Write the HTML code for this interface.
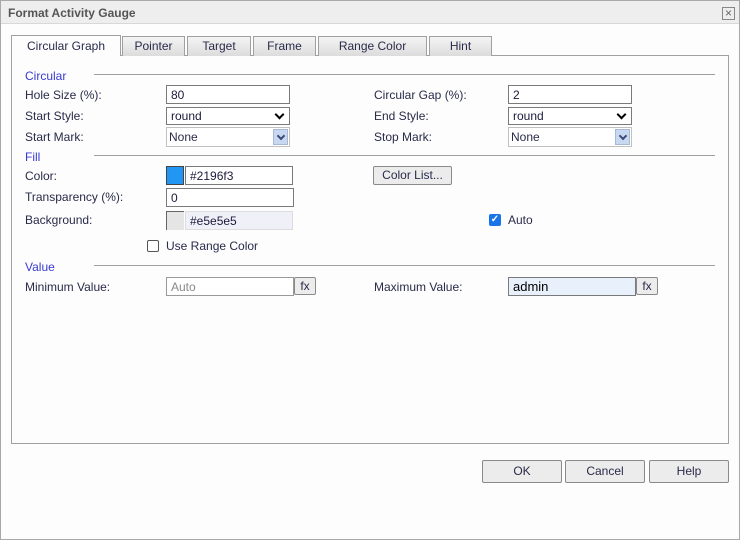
<!DOCTYPE html>
<html><head><style>
*{box-sizing:border-box;margin:0;padding:0}
body{width:740px;height:540px;background:#fff;font-family:"Liberation Sans",Verdana,sans-serif;font-size:12px;color:#2a2a4a;position:relative;overflow:hidden}
.a{position:absolute}
.dlg{left:0;top:0;width:740px;height:540px;border:1px solid #a8a8a8;background:#fcfdfc}
.title{left:1px;top:1px;width:738px;height:23px;background:#eeeeee;border-bottom:1px solid #d8d8d8}
.tab{height:20px;top:36px;border:1px solid #a0a0a0;border-bottom:none;background:linear-gradient(#f4f4f4,#dcdcdc);text-align:center;line-height:19px;font-size:12px}
.panel{left:11px;top:55px;width:718px;height:389px;border:1px solid #a0a0a0;background:#fcfdfc}
.sec{color:#3a3ad0;font-size:12px}
.line{height:1px;background:#a0a0a0;left:94px;width:621px}
.lbl{font-size:12px}
.inp{border:1px solid #7a7a7a;background:#fff;height:19px;padding-left:4px;padding-top:1px;line-height:16px;font-size:12px;color:#1a1a3a}
.sel{border:1px solid #c0c0c0;background:#fff;height:20px;padding-left:2px;line-height:18px}
.dd{position:absolute;right:1px;top:1px;width:15px;height:16px;background:#c8d8f0;border:1px solid #a8b8d8}
.dd:after{content:"";position:absolute;left:4px;top:3px;width:4px;height:4px;border-right:2px solid #3a4a7a;border-bottom:2px solid #3a4a7a;transform:rotate(45deg)}
.btn{border:1px solid #8a8a8a;border-radius:2px;background:#ececec;text-align:center;line-height:20px}
.chev{position:absolute;right:6px;top:3px;width:7px;height:7px;border-right:2px solid #000;border-bottom:2px solid #000;transform:rotate(45deg)}
</style></head><body>
<div class="a dlg"></div>
<div class="a title"></div>
<div class="a" style="left:8px;top:6px;font-weight:bold;font-size:12px;color:#555">Format Activity Gauge</div>
<div class="a" style="left:722px;top:7px;width:13px;height:13px;border:1px solid #888;font-size:12px;line-height:10px;text-align:center;color:#666">×</div>

<div class="a panel"></div>
<div class="a tab" style="left:11px;top:35px;width:110px;height:21px;background:#fcfdfc;line-height:21px">Circular Graph</div>
<div class="a tab" style="left:122px;width:63px">Pointer</div>
<div class="a tab" style="left:187px;width:64px">Target</div>
<div class="a tab" style="left:253px;width:63px">Frame</div>
<div class="a tab" style="left:318px;width:109px">Range Color</div>
<div class="a tab" style="left:429px;width:63px">Hint</div>

<div class="a sec" style="left:25px;top:69px">Circular</div><div class="a line" style="top:74px"></div>
<div class="a lbl" style="left:25px;top:88px">Hole Size (%):</div>
<div class="a inp" style="left:166px;top:85px;width:124px">80</div>
<div class="a lbl" style="left:374px;top:88px">Circular Gap (%):</div>
<div class="a inp" style="left:508px;top:85px;width:124px">2</div>
<div class="a lbl" style="left:25px;top:109px">Start Style:</div>
<div class="a inp" style="left:166px;top:107px;width:124px;height:18px;line-height:15px">round<div class="chev"></div></div>
<div class="a lbl" style="left:374px;top:109px">End Style:</div>
<div class="a inp" style="left:508px;top:107px;width:124px;height:18px;line-height:15px">round<div class="chev"></div></div>
<div class="a lbl" style="left:25px;top:130px">Start Mark:</div>
<div class="a sel" style="left:166px;top:127px;width:124px">None<div class="dd"></div></div>
<div class="a lbl" style="left:374px;top:130px">Stop Mark:</div>
<div class="a sel" style="left:508px;top:127px;width:124px">None<div class="dd"></div></div>

<div class="a sec" style="left:25px;top:150px">Fill</div><div class="a line" style="top:155px"></div>
<div class="a lbl" style="left:25px;top:169px">Color:</div>
<div class="a" style="left:166px;top:166px;width:18px;height:19px;background:#2196f3;border:1px solid #444"></div>
<div class="a inp" style="left:185px;top:166px;width:108px">#2196f3</div>
<div class="a btn" style="left:373px;top:166px;width:79px;height:19px;line-height:17px">Color List...</div>
<div class="a lbl" style="left:25px;top:190px">Transparency (%):</div>
<div class="a inp" style="left:166px;top:188px;width:128px">0</div>
<div class="a lbl" style="left:25px;top:213px">Background:</div>
<div class="a" style="left:166px;top:211px;width:18px;height:19px;background:#e5e5e5;border:1px solid #666;border-right:none;border-bottom:none"></div>
<div class="a inp" style="left:185px;top:211px;width:108px;background:#f0f0f8;border-color:#ddd">#e5e5e5</div>
<div class="a" style="left:489px;top:214px;width:12px;height:12px;background:#1a73e8;border-radius:2px;color:#fff;font-size:10px;line-height:12px;text-align:center;font-weight:bold">✓</div>
<div class="a lbl" style="left:508px;top:213px">Auto</div>
<div class="a" style="left:147px;top:240px;width:12px;height:12px;border:1px solid #555;border-radius:2px;background:#fff"></div>
<div class="a lbl" style="left:166px;top:239px">Use Range Color</div>

<div class="a sec" style="left:25px;top:260px">Value</div><div class="a line" style="top:265px"></div>
<div class="a lbl" style="left:25px;top:280px">Minimum Value:</div>
<div class="a inp" style="left:166px;top:277px;width:128px;color:#888;border-color:#999">Auto</div>
<div class="a btn" style="left:294px;top:277px;width:22px;height:18px;line-height:16px">fx</div>
<div class="a lbl" style="left:374px;top:280px">Maximum Value:</div>
<div class="a inp" style="left:508px;top:277px;width:128px;background:#e8f0fc;font-size:13px;color:#000">admin</div>
<div class="a btn" style="left:636px;top:277px;width:22px;height:18px;line-height:16px">fx</div>

<div class="a btn" style="left:482px;top:460px;width:80px;height:23px">OK</div>
<div class="a btn" style="left:565px;top:460px;width:80px;height:23px">Cancel</div>
<div class="a btn" style="left:649px;top:460px;width:80px;height:23px">Help</div>
</body></html>
